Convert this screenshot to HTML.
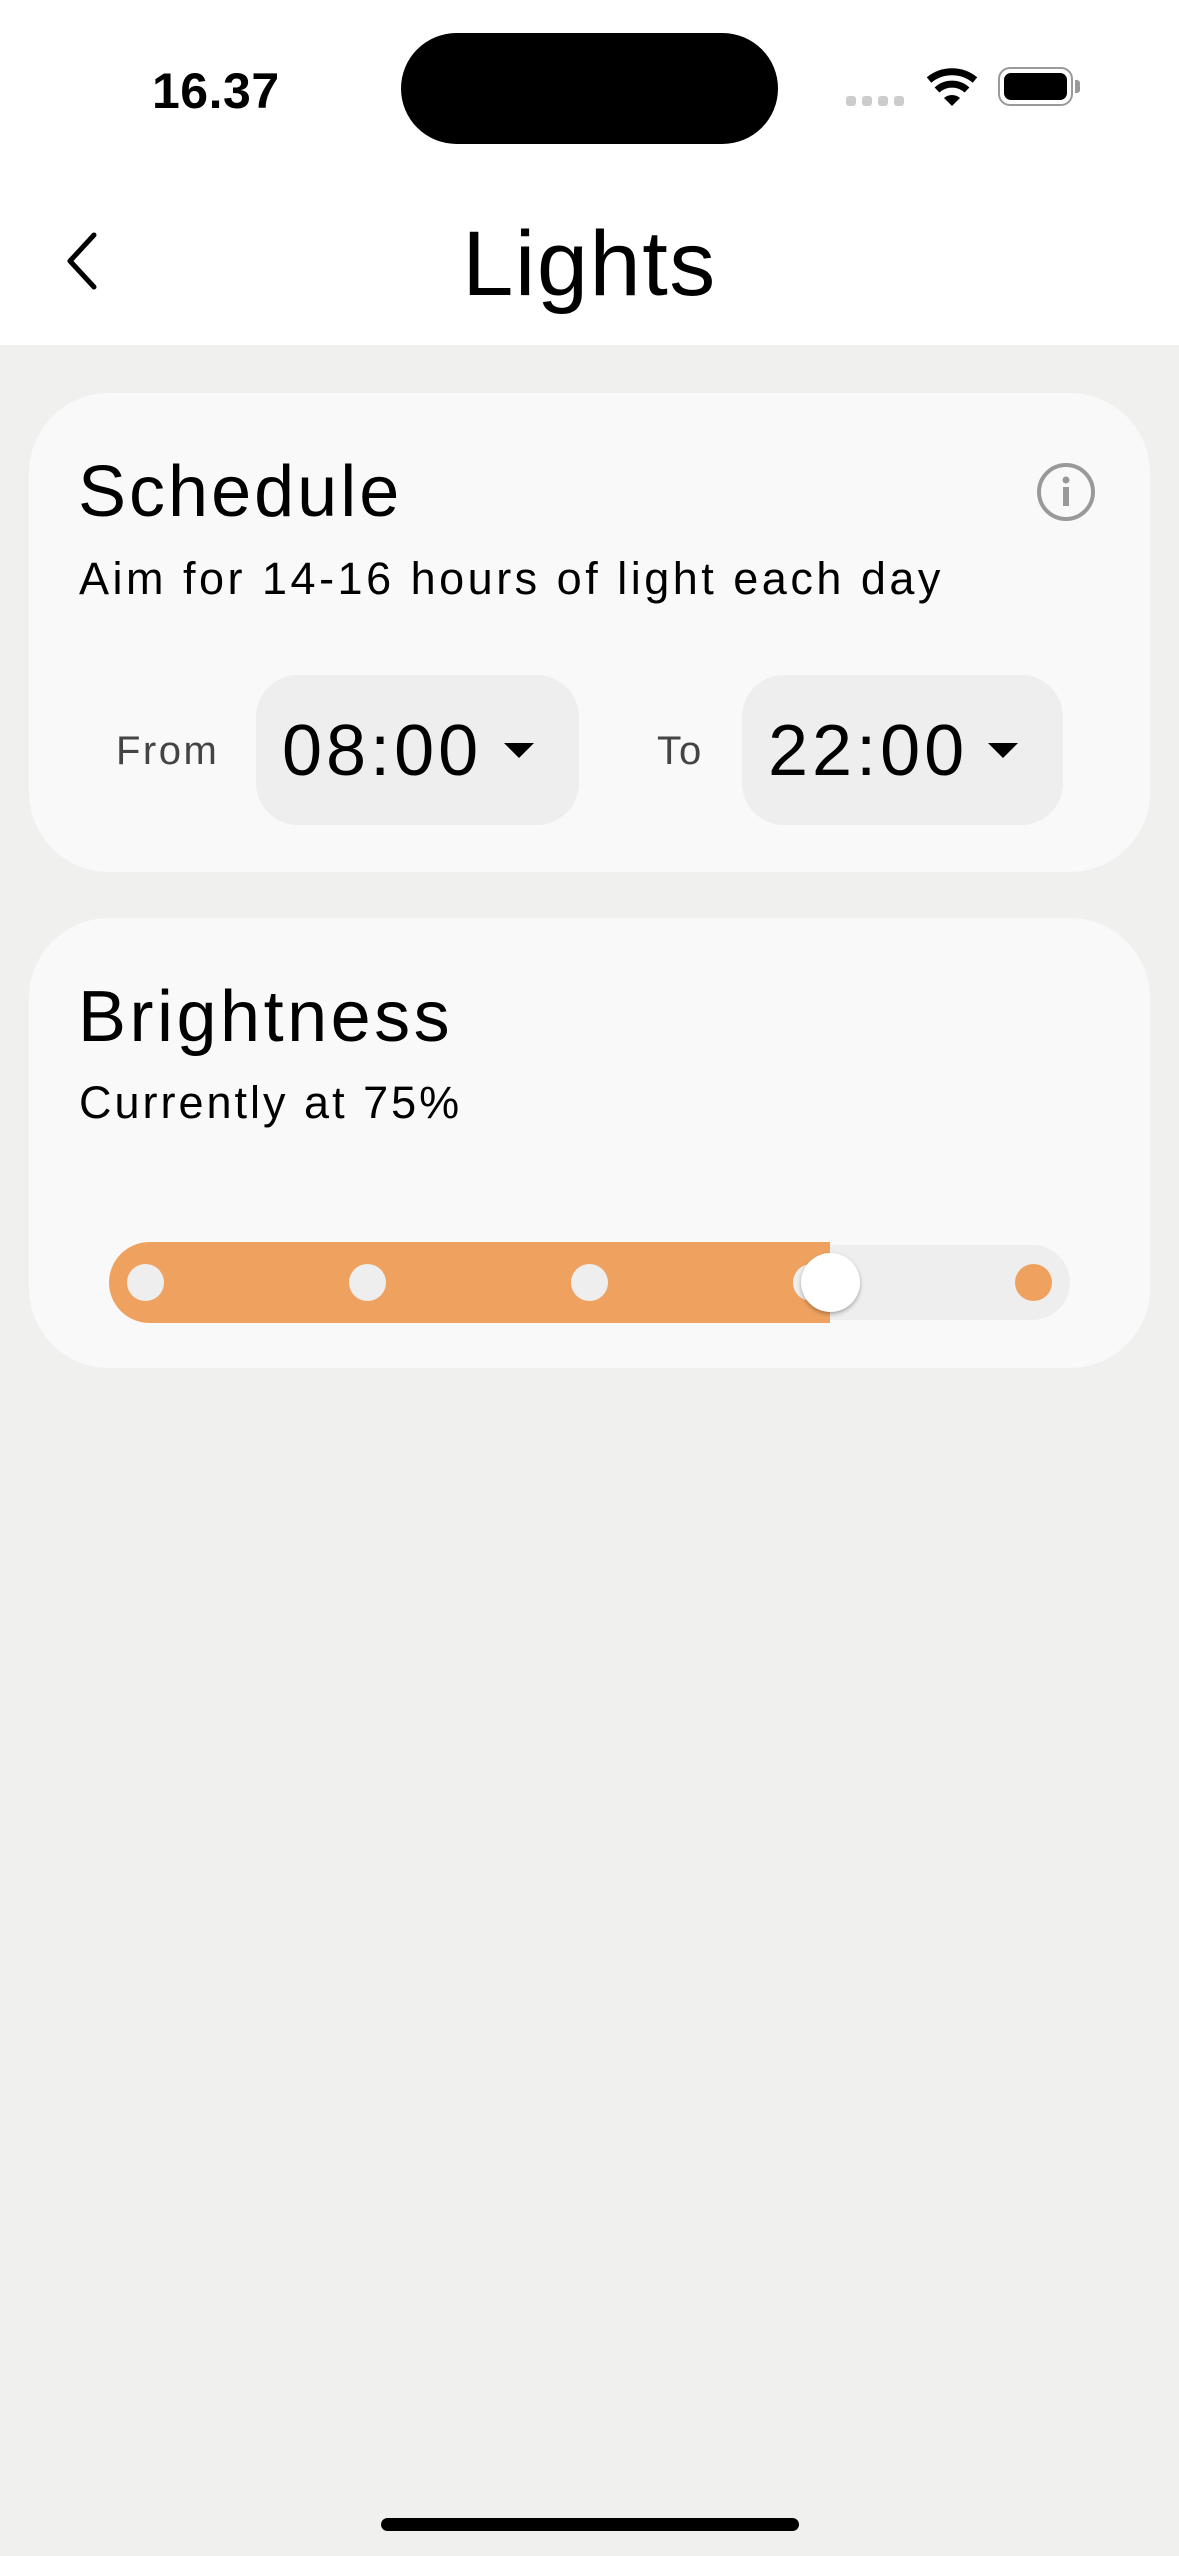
<!DOCTYPE html>
<html><head><meta charset="utf-8"><style>
*{margin:0;padding:0;box-sizing:border-box}
body{width:1179px;height:2556px;background:#f0f0ef;font-family:"Liberation Sans",sans-serif;position:relative;overflow:hidden;color:#000}
.abs{position:absolute}
.t{position:absolute;white-space:nowrap;line-height:1}
</style></head><body>
<div class="abs" style="left:0;top:0;width:1179px;height:345px;background:#fff"></div>
<div class="t" style="left:152px;top:66px;font-size:50px;font-weight:bold;letter-spacing:0.5px">16.37</div>
<div class="abs" style="left:401px;top:33px;width:377px;height:111px;border-radius:56px;background:#000"></div>
<div class="abs" style="left:846px;top:96px;width:10px;height:10px;border-radius:3px;background:#ccc"></div>
<div class="abs" style="left:862px;top:96px;width:10px;height:10px;border-radius:3px;background:#ccc"></div>
<div class="abs" style="left:878px;top:96px;width:10px;height:10px;border-radius:3px;background:#ccc"></div>
<div class="abs" style="left:894px;top:96px;width:10px;height:10px;border-radius:3px;background:#ccc"></div>
<svg class="abs" style="left:925px;top:68px" width="54" height="40" viewBox="0 0 54 40">
<path d="M4 12 A36 36 0 0 1 50 12" stroke="#000" stroke-width="7" fill="none"/>
<path d="M12 22 A22 22 0 0 1 42 22" stroke="#000" stroke-width="7" fill="none"/>
<path d="M19 30 L27 38 L35 30 A12 12 0 0 0 19 30Z" fill="#000"/>
</svg>
<div class="abs" style="left:998px;top:67px;width:75px;height:39px;border:2.5px solid #999;border-radius:12px;padding:4px"><div style="width:100%;height:100%;background:#000;border-radius:7px"></div></div>
<div class="abs" style="left:1075px;top:80px;width:5px;height:13px;background:#999;border-radius:0 3px 3px 0"></div>
<svg class="abs" style="left:62px;top:230px" width="44" height="62" viewBox="0 0 44 62"><path d="M32 5 L8 31 L32 57" stroke="#000" stroke-width="5" fill="none" stroke-linecap="round" stroke-linejoin="round"/></svg>
<div class="t" style="left:0;width:1179px;text-align:center;top:218px;font-size:92px;letter-spacing:1.5px">Lights</div>

<div class="abs" style="left:29px;top:393px;width:1121px;height:479px;background:#f9f9f9;border-radius:80px"></div>
<div class="t" style="left:78px;top:456px;font-size:72px;letter-spacing:3px">Schedule</div>
<div class="t" style="left:79px;top:556px;font-size:45px;letter-spacing:3.5px">Aim for 14-16 hours of light each day</div>
<svg class="abs" style="left:1036px;top:462px" width="60" height="60" viewBox="0 0 60 60"><circle cx="30" cy="30" r="27" stroke="#999" stroke-width="4" fill="none"/><circle cx="30" cy="18" r="3.5" fill="#999"/><rect x="27" y="25" width="6" height="19" fill="#999"/></svg>
<div class="t" style="left:116px;top:731px;font-size:40px;color:#444;letter-spacing:2.5px">From</div>
<div class="abs" style="left:256px;top:675px;width:323px;height:150px;border-radius:42px;background:#eeeeee"></div>
<div class="t" style="left:282px;top:715px;font-size:72px;letter-spacing:4px">08:00</div>
<svg class="abs" style="left:504px;top:743px" width="30" height="15"><path d="M0 0 L30 0 L15 15Z" fill="#000"/></svg>
<div class="t" style="left:657px;top:731px;font-size:40px;color:#444;letter-spacing:2px">To</div>
<div class="abs" style="left:742px;top:675px;width:321px;height:150px;border-radius:42px;background:#eeeeee"></div>
<div class="t" style="left:768px;top:715px;font-size:72px;letter-spacing:4px">22:00</div>
<svg class="abs" style="left:988px;top:743px" width="30" height="15"><path d="M0 0 L30 0 L15 15Z" fill="#000"/></svg>

<div class="abs" style="left:29px;top:918px;width:1121px;height:450px;background:#f9f9f9;border-radius:80px"></div>
<div class="t" style="left:78px;top:981px;font-size:72px;letter-spacing:3.5px">Brightness</div>
<div class="t" style="left:79px;top:1080px;font-size:45px;letter-spacing:3px">Currently at 75%</div>
<div class="abs" style="left:800px;top:1245px;width:270px;height:75px;border-radius:0 38px 38px 0;background:#eeeeee"></div>
<div class="abs" style="left:109px;top:1242px;width:721px;height:81px;border-radius:41px 0 0 41px;background:#efa260"></div>
<div class="abs" style="left:127px;top:1264px;width:37px;height:37px;border-radius:50%;background:#eee"></div>
<div class="abs" style="left:349px;top:1264px;width:37px;height:37px;border-radius:50%;background:#eee"></div>
<div class="abs" style="left:571px;top:1264px;width:37px;height:37px;border-radius:50%;background:#eee"></div>
<div class="abs" style="left:793px;top:1264px;width:37px;height:37px;border-radius:50%;background:#eee"></div>
<div class="abs" style="left:1015px;top:1264px;width:37px;height:37px;border-radius:50%;background:#efa260"></div>
<div class="abs" style="left:801px;top:1253px;width:59px;height:59px;border-radius:50%;background:#fff;box-shadow:0 2px 4px rgba(0,0,0,.3)"></div>

<div class="abs" style="left:381px;top:2518px;width:418px;height:13px;border-radius:7px;background:#000"></div>
</body></html>
